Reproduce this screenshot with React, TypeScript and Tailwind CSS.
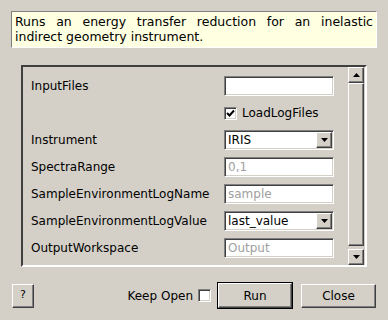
import React from "react";

const sunken =
  "border border-t-[#808080] border-l-[#808080] border-b-white border-r-white shadow-[inset_1px_1px_0_#404040,inset_-1px_-1px_0_#d4d0c8]";
const raised =
  "border border-t-white border-l-white border-b-[#404040] border-r-[#404040] shadow-[inset_-1px_-1px_0_#808080] bg-[#d4d0c8]";

function Down() {
  return (
    <svg width="7" height="4" viewBox="0 0 7 4">
      <polygon points="0,0 7,0 3.5,4" fill="#000" />
    </svg>
  );
}
function Up() {
  return (
    <svg width="7" height="4" viewBox="0 0 7 4">
      <polygon points="0,4 7,4 3.5,0" fill="#000" />
    </svg>
  );
}

function CheckBox({ checked }: { checked: boolean }) {
  return (
    <div className={`${sunken} w-[13px] h-[13px] bg-white flex items-center justify-center shrink-0`}>
      {checked && (
        <svg width="9" height="9" viewBox="0 0 9 9">
          <polyline points="1,4 3.5,6.5 8,1.5" fill="none" stroke="#000" strokeWidth="2" />
        </svg>
      )}
    </div>
  );
}

function TextBox({ value, placeholder }: { value?: string; placeholder?: string }) {
  return (
    <div className={`${sunken} w-[110px] h-[20px] bg-white flex items-center px-[3px]`}>
      {value ? (
        <span className="text-black">{value}</span>
      ) : placeholder ? (
        <span className="text-[#a0a0a0]">{placeholder}</span>
      ) : null}
    </div>
  );
}

function Combo({ value }: { value: string }) {
  return (
    <div className={`${sunken} w-[110px] h-[20px] bg-white flex items-center pl-[3px] pr-[1px]`}>
      <span className="flex-1 text-black">{value}</span>
      <div className={`${raised} w-[16px] h-[16px] flex items-center justify-center`}>
        <Down />
      </div>
    </div>
  );
}

function Row({ label, children }: { label?: string; children: React.ReactNode }) {
  return (
    <div className="flex items-center h-[20px]">
      <div className="w-[193px] whitespace-nowrap overflow-hidden">{label}</div>
      {children}
    </div>
  );
}

export default function App() {
  return (
    <div className="w-[388px] h-[320px] bg-[#d4d0c8] text-[12px] text-black font-['DejaVu_Sans',sans-serif] pt-[11px]">
      <div className="ml-[11px] w-[366px] h-[37px] bg-[#ffffe1] border border-t-[#808080] border-l-[#808080] border-b-white border-r-white px-[3px] pt-[2px] leading-[15px] text-justify text-[12.5px]">
        Runs an energy transfer reduction for an inelastic indirect geometry instrument.
      </div>

      <div className="ml-[21px] mt-[17px] w-[346px] h-[202px] border-2 border-t-[#404040] border-l-[#404040] border-b-white border-r-white shadow-[inset_-1px_-1px_0_#d4d0c8] flex">
        <div className="flex-1 pl-[8px] pt-[9px] flex flex-col gap-[7px]">
          <Row label="InputFiles">
            <TextBox />
          </Row>
          <Row>
            <div className="flex items-center gap-[5px]">
              <CheckBox checked />
              <span>LoadLogFiles</span>
            </div>
          </Row>
          <Row label="Instrument">
            <Combo value="IRIS" />
          </Row>
          <Row label="SpectraRange">
            <TextBox placeholder="0,1" />
          </Row>
          <Row label="SampleEnvironmentLogName">
            <TextBox placeholder="sample" />
          </Row>
          <Row label="SampleEnvironmentLogValue">
            <Combo value="last_value" />
          </Row>
          <Row label="OutputWorkspace">
            <TextBox placeholder="Output" />
          </Row>
        </div>
        <div className="w-[16px] mr-[1px] flex flex-col">
          <div className={`${raised} h-[16px] flex items-center justify-center`}>
            <Up />
          </div>
          <div className={`${raised} flex-1 mb-[3px]`} />
          <div className={`${raised} h-[16px] flex items-center justify-center`}>
            <Down />
          </div>
        </div>
      </div>

      <div className="mt-[15px] h-[27px] flex items-center pl-[12px] pr-[12px]">
        <div className={`${raised} w-[22px] h-[24px] flex items-center justify-center text-[11px]`}>?</div>
        <div className="flex-1" />
        <span>Keep Open</span>
        <div className="ml-[5px]">
          <CheckBox checked={false} />
        </div>
        <div className="ml-[6px] border border-black">
          <div className={`${raised} w-[74px] h-[25px] flex items-center justify-center`}>Run</div>
        </div>
        <div className={`${raised} ml-[8px] w-[75px] h-[24px] flex items-center justify-center`}>Close</div>
      </div>
    </div>
  );
}
